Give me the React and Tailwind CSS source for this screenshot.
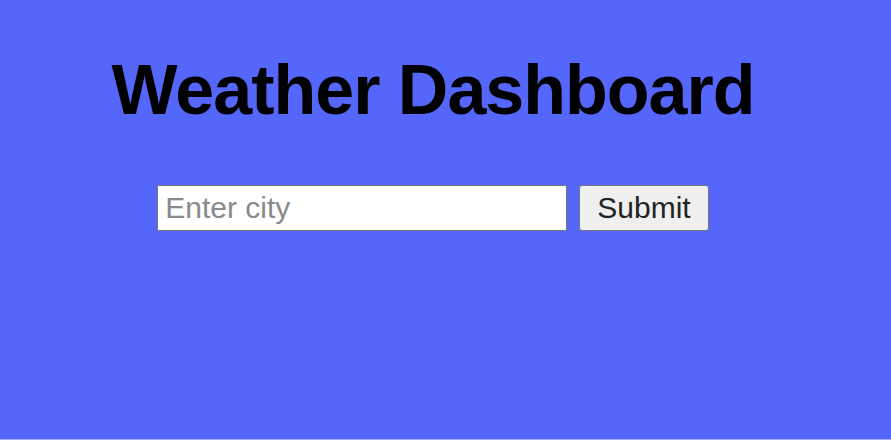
export default function App() {
  return (
    <div
      className="h-[440px] w-full bg-[#5566fb] border-b border-[#a3abfc] flex flex-col items-center pr-[25px] pt-[38px]"
      style={{ fontFamily: '"Liberation Sans", Arial, sans-serif' }}
    >
      <h1 className="text-[70px] leading-normal font-bold tracking-[-1px] text-black">
        Weather Dashboard
      </h1>

      {/* search form */}
      <form className="flex items-center gap-[12px] mt-[42px]" onSubmit={(e) => e.preventDefault()}>
        <input
          type="text"
          placeholder="Enter city"
          className="w-[410px] h-[46px] bg-white border border-[#767676] px-[7px] text-[30px] text-black placeholder:text-[#8a8a8a] outline-none"
        />
        <button
          type="submit"
          className="h-[46px] px-[17px] bg-[#efefef] border border-[#767676] rounded-[3px] text-[30px] leading-none text-[#222]"
        >
          Submit
        </button>
      </form>
    </div>
  );
}
